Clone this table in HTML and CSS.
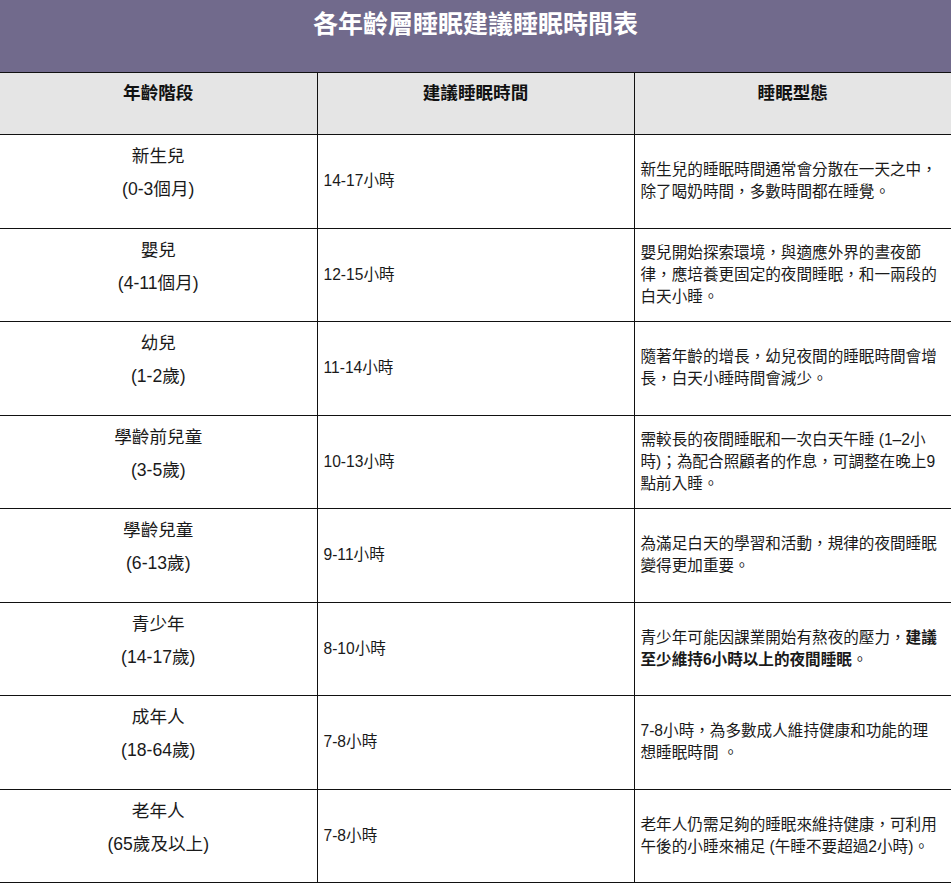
FILE: index.html
```html
<!DOCTYPE html>
<html lang="zh-Hant">
<head>
<meta charset="utf-8">
<title>各年齡層睡眠建議睡眠時間表</title>
<link rel="stylesheet" href="styles.css">
</head>
<body>
<table class="sleep-table">
  <colgroup>
    <col class="c1"><col class="c2"><col class="c3">
  </colgroup>
  <thead>
    <tr class="title-row">
      <th colspan="3" class="title">各年齡層睡眠建議睡眠時間表</th>
    </tr>
    <tr class="head-row">
      <th>年齡階段</th>
      <th>建議睡眠時間</th>
      <th>睡眠型態</th>
    </tr>
  </thead>
  <tbody>
    <tr>
      <td class="age">新生兒<br>(0-3個月)</td>
      <td class="hours">14-17小時</td>
      <td class="desc">新生兒的睡眠時間通常會分散在一天之中，除了喝奶時間，多數時間都在睡覺。</td>
    </tr>
    <tr>
      <td class="age">嬰兒<br>(4-11個月)</td>
      <td class="hours">12-15小時</td>
      <td class="desc">嬰兒開始探索環境，與適應外界的晝夜節律，應培養更固定的夜間睡眠，和一兩段的白天小睡。</td>
    </tr>
    <tr>
      <td class="age">幼兒<br>(1-2歲)</td>
      <td class="hours">11-14小時</td>
      <td class="desc">隨著年齡的增長，幼兒夜間的睡眠時間會增長，白天小睡時間會減少。</td>
    </tr>
    <tr>
      <td class="age">學齡前兒童<br>(3-5歲)</td>
      <td class="hours">10-13小時</td>
      <td class="desc">需較長的夜間睡眠和一次白天午睡 (1–2小時)；為配合照顧者的作息，可調整在晚上9點前入睡。</td>
    </tr>
    <tr>
      <td class="age">學齡兒童<br>(6-13歲)</td>
      <td class="hours">9-11小時</td>
      <td class="desc">為滿足白天的學習和活動，規律的夜間睡眠變得更加重要。</td>
    </tr>
    <tr>
      <td class="age">青少年<br>(14-17歲)</td>
      <td class="hours">8-10小時</td>
      <td class="desc">青少年可能因課業開始有熬夜的壓力，<strong>建議</strong><strong>至少維持6小時以上的夜間睡眠</strong>。</td>
    </tr>
    <tr>
      <td class="age">成年人<br>(18-64歲)</td>
      <td class="hours">7-8小時</td>
      <td class="desc">7-8小時，為多數成人維持健康和功能的理想睡眠時間 。</td>
    </tr>
    <tr>
      <td class="age">老年人<br>(65歲及以上)</td>
      <td class="hours">7-8小時</td>
      <td class="desc">老年人仍需足夠的睡眠來維持健康，可利用午後的小睡來補足 (午睡不要超過2小時)。</td>
    </tr>
  </tbody>
</table>
</body>
</html>
```
FILE: styles.css
```css
html, body {
  margin: 0;
  padding: 0;
  background: #ffffff;
}
body {
  font-family: "Liberation Sans", "Noto Sans CJK TC", sans-serif;
  color: #1a1a1a;
  overflow: hidden;
}
.sleep-table {
  width: 951px;
  border-collapse: collapse;
  table-layout: fixed;
}
.c1 { width: 317px; }
.c2 { width: 317px; }
.c3 { width: 317px; }

.sleep-table th,
.sleep-table td {
  border: 1px solid #111111;
}
.sleep-table tr > :first-child { border-left: none; }
.sleep-table tr > :last-child { border-right: none; }

.title {
  background: #716a8c;
  color: #ffffff;
  font-size: 25px;
  font-weight: bold;
  line-height: 36px;
  padding: 6px 0 30px;
  text-align: center;
  border-top: none !important;
}
.head-row th {
  background: #e5e5e5;
  font-size: 17.6px;
  font-weight: bold;
  line-height: 24px;
  padding: 8px 6px 29px;
  text-align: center;
  vertical-align: top;
  color: #111111;
}
.age {
  font-size: 17.6px;
  line-height: 33px;
  text-align: center;
  vertical-align: top;
  padding: 5px 6px 21.5px;
}
.hours {
  font-size: 15.6px;
  line-height: 22px;
  padding: 0 6px;
  vertical-align: middle;
}
.desc {
  font-size: 15.6px;
  line-height: 22px;
  padding: 0 8px 0 6px;
  vertical-align: middle;
}
.desc strong {
  font-weight: bold;
  line-height: 22px;
}
```
